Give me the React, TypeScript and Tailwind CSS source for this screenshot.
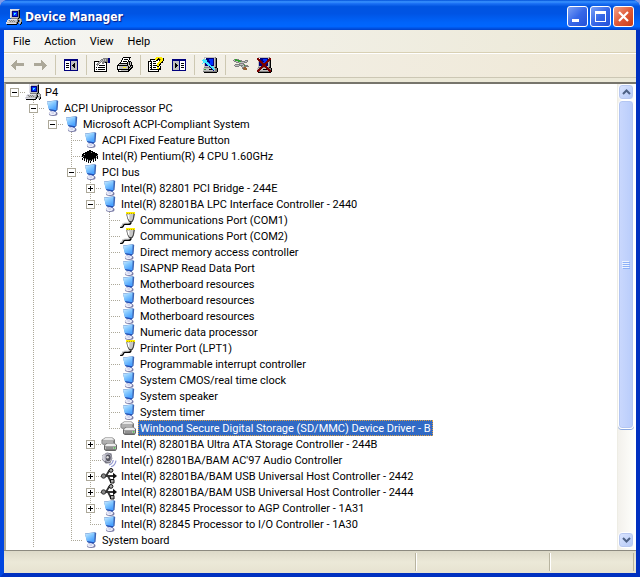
import React from 'react';

const PALETTE: Record<string, string> = {
  K: '#000000',
  W: '#ffffff',
  L: '#dedee8',
  G: '#c0c0c0',
  D: '#808080',
  N: '#00007c',
  B: '#0030ff',
  C: '#40e8ff',
  Y: '#ffef00',
  O: '#b08800',
  E: '#30a030',
  R: '#7a0000',
  M: '#9a6030',
};

function Pixels({ rows }: { rows: string[] }) {
  return (
    <svg width="16" height="16" viewBox="0 0 16 16" shapeRendering="crispEdges" className="block shrink-0" aria-hidden="true">
      {rows.flatMap((row, y) =>
        [...row].map((c, x) => (c === '.' ? null : <rect key={`${x}-${y}`} x={x} y={y} width="1" height="1" fill={PALETTE[c]} />)),
      )}
    </svg>
  );
}

const COMPUTER = [
  '....LLLLLLLLLD..',
  '....LWGGGGGGDK..',
  '....LGNNNNNNDK..',
  '....LGNBBBBNDK..',
  '....LGNBCCBNDK..',
  '....LGNBCBBNDK..',
  '....LGNBBBBNDK..',
  '....LGNNNNNNDK..',
  '....LGGGGGGGDK..',
  '.....DDDDDDDKDD.',
  '..LLLLLLLLLDDGGD',
  '.LGDGDGDGGGDK.GD',
  '.LLGDGDGDGGDKDGD',
  'LGGGGGGGGGDKDGGK',
  'LLLLLLLLLLDK.GDK',
  '.KKKKKKKKKK...K.',
];

const CHIP = [
  '................',
  '................',
  '.......KK.......',
  '.....KKKKKK.....',
  '...KKKKKKDKKK...',
  '.KKKKKKKKKKKKKK.',
  'KKGKKKKKKKKKKKKK',
  'KKKKKKKKKKKKKKKD',
  'KDKKKKKKKKKKKKGK',
  '.KKKKKKKKKKKKKDK',
  'K.KDKKKKKKKKDK.K',
  'K.K.KDKKKKDK.K..',
  '..K.K.KDDK.K.K..',
  '....K.K.K..K....',
  '......K.K.......',
  '................',
];

const TREE_PANE = [
  '................',
  '................',
  '.NNNNNNNNNNNNNN.',
  '.NNNNNNNNNNNNNN.',
  '.NWWWWWNGGGGGGN.',
  '.NWWWWWNGGGGGGN.',
  '.NWKKKWNGGGKGGN.',
  '.NWWWWWNGGKKGGN.',
  '.NWKKKWNGKKKGGN.',
  '.NWWWWWNGGKKGGN.',
  '.NWKKKWNGGGKGGN.',
  '.NWWWWWNGGGGGGN.',
  '.NWWWWWNGGGGGGN.',
  '.NNNNNNNNNNNNNN.',
  '................',
  '................',
];

const ACTION_PANE = [
  '................',
  '................',
  '.NNNNNNNNNNNNNN.',
  '.NNNNNNNNNNNNNN.',
  '.NGGGGGGNWWWWWN.',
  '.NGGGGGGNWWWWWN.',
  '.NGGKGGGNWKKKWN.',
  '.NGGKKGGNWWWWWN.',
  '.NGGKKKGNWKKKWN.',
  '.NGGKKGGNWWWWWN.',
  '.NGGKGGGNWKKKWN.',
  '.NGGGGGGNWWWWWN.',
  '.NGGGGGGNWWWWWN.',
  '.NNNNNNNNNNNNNN.',
  '................',
  '................',
];

const PROPERTIES = [
  '................',
  '.........DDDDDNN',
  '.......DDGDGDDNN',
  '......DGDGDGDDNN',
  'KKKKKDGDGDDDDDNN',
  'KWWWDGDWDDDKKDNN',
  'KWWDGDWWDDWWK...',
  'KWDDDWWWWWWWK...',
  'KWWDWKKKKKKWK...',
  'KWWWWWWWWWWWK...',
  'KWKWKKKKKKKWK...',
  'KWWWWWWWWWWWK...',
  'KWKWKKKKKKKWK...',
  'KWWWWWWWWWWWK...',
  'KKKKKKKKKKKKK...',
  '................',
];

const PRINTER = [
  '......KKKKKKKK..',
  '.....KWWWWWWK...',
  '.....KWKKKKWK...',
  '....KWWWWWWK....',
  '....KWKKKKWKKK..',
  '...KWWWWWWKGKGK.',
  '..KKKKKKKKKGKGK.',
  '.KGGGGGGGGKGKGK.',
  'KKKKKKKKKKKGGKKK',
  'KWGGGGGGGGGKGKGK',
  'KWGGGGYYYGGKKGKK',
  'KWGGGGGGGGGKGKK.',
  'KKKKKKKKKKKKKK..',
  '.KWWGGGGGGGKK...',
  '.KKKKKKKKKKK....',
  '................',
];

const HELP = [
  '........YYYYYY..',
  '.......YYYKOYYYK',
  '..KKKKKYYKKKOYYK',
  '..KWWWWWKKWKYYYK',
  'KKKKWKKKWWWYYYK.',
  'KWWKWWWWWWYYYKK.',
  'KWKKWKKKWYYYK...',
  'KWWKWWWWWYYKK...',
  'KWKKWKKKKYYK....',
  'KWWKWWWWWKKWK...',
  'KWKKWKKKWYYWK...',
  'KWWKWWWWWYYKK...',
  'KWKKKKKKKKKKK...',
  'KWWWWWWWWWK.....',
  'KKKKKKKKKKK.....',
  '................',
];

const SCAN = [
  '..GGGGGGGGGGGD..',
  '..GWNNNNNNNNGDK.',
  '.CGCNNNBBBBNGDK.',
  'CCCCCNNBBBBNGDK.',
  '.CCCCNNNBBBNGDK.',
  '.CCCCCBNBBBNGDK.',
  'C.GNCCCBBBBNGDK.',
  '..GNNCCCBBBNGDK.',
  '..GNNNCCCNNNGDK.',
  '..GGGGGNCCCGGDK.',
  '..DDDDDDNCCCDKK.',
  '.GGGGGGGGNCCGDDK',
  '.GEEGGGKKKNCCDDK',
  '.GGGGGGGGGGNGDDK',
  '.DDDDDDDDDDDDDDK',
  '..KKKKKKKKKKKKK.',
];

const UNINSTALL = [
  '..GGGGGGGGGGGD..',
  '.RRWNNNNNNNNGRR.',
  '.RRRNNNBBBBNRRR.',
  '..RRRNNBBBBRRRK.',
  '..GRRRNNBBRRRDK.',
  '..GNRRRBBRRRGDK.',
  '..GNNRRRRRRNGDK.',
  '..GNNNRRRRNNGDK.',
  '..GNNNRRRRNNGDK.',
  '..GGGRRRRRRGGDK.',
  '..DDRRRDDRRRDKK.',
  '.GGRRRGGGGRRRDDK',
  '.GRRRGGKKKKRRRDK',
  '.RRRGGGGGGGGRRRK',
  '.RRDDDDDDDDDDRRK',
  '..KKKKKKKKKKKKK.',
];

const DISABLE = [
  '................',
  '................',
  '.DEEDD..........',
  'DGEEEEEDD...DDD.',
  '.DDGGEEEDDDDGGD.',
  '...DDDGGGGGDDD..',
  '......DDDDD.....',
  '..DDDDDGGGDD....',
  '.DGGGGDDDDGEDDD.',
  '..DDDD..DGGDDDDD',
  '.........DDMM...',
  '.........DMMMM..',
  '..........DMMM..',
  '................',
  '................',
  '................',
];

function Arrow({ forward = false }: { forward?: boolean }) {
  return (
    <svg width="16" height="16" shapeRendering="crispEdges" className="block" aria-hidden="true">
      <path
        d={
          forward
            ? 'M2 6h7V3h1v1h1v1h1v1h1v1h1v1h1v1h-1v1h-1v1h-1v1h-1v1h-1V9H2z'
            : 'M14 6H7V3H6v1H5v1H4v1H3v1H2v1H1v1h1v1h1v1h1v1h1v1h1V9h8z'
        }
        fill="#aca899"
      />
    </svg>
  );
}

type IconName = 'computer' | 'device' | 'chip' | 'port' | 'drive' | 'sound' | 'usb';

function DeviceIcon({ name }: { name: IconName }) {
  if (name === 'computer') return <Pixels rows={COMPUTER} />;
  if (name === 'chip') return <Pixels rows={CHIP} />;
  return (
    <svg width="16" height="16" viewBox="0 0 16 16" className="block shrink-0" aria-hidden="true">
      {name === 'device' && (
        <>
          <ellipse cx="9.2" cy="13.8" rx="4.3" ry="2.2" fill="#7c7ea8" />
          <path d="M6.5 10.5h5.5l-.3 3H7z" fill="#9496c0" />
          <ellipse cx="8.6" cy="13.3" rx="3.4" ry="1.8" fill="#eceefa" />
          <path d="M7.5 11h2.5v3H7.5z" fill="#d4d6ee" />
          <path d="M3 1.5 13 .2l1.2.8-.6 8.8-2 1.8L5.2 10z" fill="#3d66b4" />
          <path d="M3 1.7 12.6.6l-.3 9.6L4.8 9.2z" fill="url(#screen)" />
          <path d="M4.8 9.2l7.5 1-.8 1.2-5.5-1z" fill="#2450b4" />
        </>
      )}
      {name === 'port' && (
        <>
          <path d="M10.5 8v2.5q0 1.5-2 1.5H5q-2 0-2 1.5T0 15.5" fill="none" stroke="#000" strokeWidth="2.2" />
          <path d="M10 8v2q0 1.2-2 1.2H5q-2 0-2.4 1.6T0 14.6" fill="none" stroke="#d0d0d0" strokeWidth="1.2" />
          <path d="M6 1.5h9l-1.2 6-1.3 2.5H9L7.5 7z" fill="#444" />
          <path d="M6.4 2h7.2l-.8 5-1.2 2h-2L8 6.5z" fill="#c6c6c6" />
          <path d="M8 3v3l1.3 2V3z" fill="#fff" />
          <path d="M6 0h9v2H6z" fill="#ffee00" />
          <path d="M7 1.5h8" stroke="#b8a000" strokeDasharray="1 1" />
        </>
      )}
      {name === 'drive' && (
        <>
          <path d="M2 3 4 1.5h7.5L14 3.8v5H2L.5 7.5V4z" fill="#777" />
          <path d="M2.5 3.2 4.2 2h7l1.6 1.4v1H1.5z" fill="#e6e6e6" />
          <path d="M1.3 4.8h11v3h-11z" fill="#b0b0b0" />
          <path d="M4 8.8 6 7h7.5L16 9v4l-1.5 2H4.8L3 13.5v-4z" fill="#666" />
          <path d="M4.5 8.8 6.4 7.6h6.8L15 9v1H4z" fill="#ededed" />
          <path d="M4 10.3h11v3H4z" fill="#bcbcbc" />
          <path d="M5 12h7" stroke="#666" />
          <path d="M12.7 11.3h1.6v1.2h-1.6z" fill="#2bc02b" />
        </>
      )}
      {name === 'sound' && (
        <>
          <path d="M1 3.5 6 .6l4.5 1 .8 5-2 4.6-4.6.4L1 7.5z" fill="#747480" />
          <path d="M1 3.8 4 2v7.5L1.2 7.3z" fill="#d4d4dc" />
          <ellipse cx="7" cy="5.8" rx="3.6" ry="4.6" fill="#bcbcc8" transform="rotate(-15 7 5.8)" />
          <ellipse cx="7.2" cy="5.8" rx="2.5" ry="3.4" fill="#55555f" />
          <circle cx="6.6" cy="5.2" r="1.2" fill="#ddd" />
          <path d="M8 13q3.8-1 4.2-5M10 14.8q4.2-1.4 5-6.2" fill="none" stroke="#9298d0" strokeWidth="1.2" />
        </>
      )}
      {name === 'usb' && (
        <>
          <path d="M3 8h11M5 8l3-5h2M7 8l2.5 5H11" fill="none" stroke="#333" strokeWidth="1.8" />
          <path d="M12 4.8 16 8l-4 3.2z" fill="#111" />
          <circle cx="2.6" cy="8" r="2.2" fill="#8a8a8a" stroke="#333" strokeWidth="1" />
          <circle cx="10" cy="2.4" r="1.9" fill="#aaa" stroke="#111" strokeWidth="1" />
          <path d="M9.5 11.5h3.5v3.5H9.5z" fill="#aaa" stroke="#111" strokeWidth="1" />
        </>
      )}
    </svg>
  );
}

/*
 * Each guide letter is one 19px column:
 * "." blank, "|" line through, "t" branch, "l" last branch,
 * "+" and "-" expander on a line, "m" expander with no line behind it.
 */
type Row = { guides: string; icon: IconName; label: string; selected?: boolean };

const ROWS: Row[] = [
  { guides: 'm', icon: 'computer', label: 'P4' },
  { guides: '.-', icon: 'device', label: 'ACPI Uniprocessor PC' },
  { guides: '.|m', icon: 'device', label: 'Microsoft ACPI-Compliant System' },
  { guides: '.|.t', icon: 'device', label: 'ACPI Fixed Feature Button' },
  { guides: '.|.t', icon: 'chip', label: 'Intel(R) Pentium(R) 4 CPU 1.60GHz' },
  { guides: '.|.-', icon: 'device', label: 'PCI bus' },
  { guides: '.|.|+', icon: 'device', label: 'Intel(R) 82801 PCI Bridge - 244E' },
  { guides: '.|.|-', icon: 'device', label: 'Intel(R) 82801BA LPC Interface Controller - 2440' },
  { guides: '.|.||t', icon: 'port', label: 'Communications Port (COM1)' },
  { guides: '.|.||t', icon: 'port', label: 'Communications Port (COM2)' },
  { guides: '.|.||t', icon: 'device', label: 'Direct memory access controller' },
  { guides: '.|.||t', icon: 'device', label: 'ISAPNP Read Data Port' },
  { guides: '.|.||t', icon: 'device', label: 'Motherboard resources' },
  { guides: '.|.||t', icon: 'device', label: 'Motherboard resources' },
  { guides: '.|.||t', icon: 'device', label: 'Motherboard resources' },
  { guides: '.|.||t', icon: 'device', label: 'Numeric data processor' },
  { guides: '.|.||t', icon: 'port', label: 'Printer Port (LPT1)' },
  { guides: '.|.||t', icon: 'device', label: 'Programmable interrupt controller' },
  { guides: '.|.||t', icon: 'device', label: 'System CMOS/real time clock' },
  { guides: '.|.||t', icon: 'device', label: 'System speaker' },
  { guides: '.|.||t', icon: 'device', label: 'System timer' },
  { guides: '.|.||l', icon: 'drive', label: 'Winbond Secure Digital Storage (SD/MMC) Device Driver - B', selected: true },
  { guides: '.|.|+', icon: 'drive', label: 'Intel(R) 82801BA Ultra ATA Storage Controller - 244B' },
  { guides: '.|.|t', icon: 'sound', label: "Intel(r) 82801BA/BAM AC'97 Audio Controller" },
  { guides: '.|.|+', icon: 'usb', label: 'Intel(R) 82801BA/BAM USB Universal Host Controller - 2442' },
  { guides: '.|.|+', icon: 'usb', label: 'Intel(R) 82801BA/BAM USB Universal Host Controller - 2444' },
  { guides: '.|.|+', icon: 'device', label: 'Intel(R) 82845 Processor to AGP Controller - 1A31' },
  { guides: '.|.|l', icon: 'device', label: 'Intel(R) 82845 Processor to I/O Controller - 1A30' },
  { guides: '.|.l', icon: 'device', label: 'System board' },
];

function Guide({ kind }: { kind: string }) {
  if (kind === '.') return <span className="block h-4 w-[19px] shrink-0" />;
  const box = '+-m'.includes(kind);
  const drawing = (
    <svg width="19" height="16" shapeRendering="crispEdges" className="block shrink-0" aria-hidden="true">
      {'|t+-'.includes(kind) && <path d="M8.5 0v16" stroke="#aca899" strokeDasharray="1 1" />}
      {kind === 'l' && <path d="M8.5 0v9" stroke="#aca899" strokeDasharray="1 1" />}
      {kind !== '|' && <path d="M8 8.5h11" stroke="#aca899" strokeDasharray="1 1" />}
      {box && (
        <>
          <rect x="4.5" y="4.5" width="8" height="8" fill="#fff" stroke="#aca899" />
          <path d="M6 8.5h5" stroke="#000" />
          {kind === '+' && <path d="M8.5 6v5" stroke="#000" />}
        </>
      )}
    </svg>
  );
  if (!box) return drawing;
  return (
    <button type="button" aria-label={kind === '+' ? 'Expand' : 'Collapse'} className="block shrink-0">
      {drawing}
    </button>
  );
}

const TOOLS: { label: string; icon: React.ReactNode }[][] = [
  [
    { label: 'Back', icon: <Arrow /> },
    { label: 'Forward', icon: <Arrow forward /> },
  ],
  [{ label: 'Show/Hide Console Tree', icon: <Pixels rows={TREE_PANE} /> }],
  [
    { label: 'Properties', icon: <Pixels rows={PROPERTIES} /> },
    { label: 'Print', icon: <Pixels rows={PRINTER} /> },
  ],
  [
    { label: 'Help', icon: <Pixels rows={HELP} /> },
    { label: 'Show/Hide Action Pane', icon: <Pixels rows={ACTION_PANE} /> },
  ],
  [{ label: 'Scan for hardware changes', icon: <Pixels rows={SCAN} /> }],
  [
    { label: 'Disable', icon: <Pixels rows={DISABLE} /> },
    { label: 'Uninstall', icon: <Pixels rows={UNINSTALL} /> },
  ],
];

function ScrollButton({ down = false }: { down?: boolean }) {
  return (
    <button
      type="button"
      aria-label={down ? 'Scroll down' : 'Scroll up'}
      className="flex h-4 w-full shrink-0 items-center justify-center rounded-sm border border-white bg-linear-to-br from-[#dce6ff] to-[#b4c8f6] shadow-[inset_0_0_0_1px_#b8c8f0]"
    >
      <svg width="9" height="6" viewBox="0 0 9 6" aria-hidden="true">
        <path d={down ? 'M1 1l3.5 3.5L8 1' : 'M1 5l3.5-3.5L8 5'} fill="none" stroke="#4d6185" strokeWidth="2" />
      </svg>
    </button>
  );
}

const CAPTION = 'flex size-[21px] items-center justify-center rounded-[3px] border border-white bg-linear-to-br';
const CAPTION_BLUE = 'from-[#7c9ff4] via-[#3768e8] to-[#2450d8]';
const CAPTION_RED = 'from-[#f0a088] via-[#e05a38] to-[#c83c14]';

export default function App() {
  return (
    <div className="bg-[#7f9be8]">
      <svg width="0" height="0" className="absolute" aria-hidden="true">
        <linearGradient id="screen" x1="0" y1="0" x2="0.6" y2="1">
          <stop offset="0" stopColor="#d8f0ff" />
          <stop offset="0.5" stopColor="#84c8ff" />
          <stop offset="1" stopColor="#48a0ff" />
        </linearGradient>
      </svg>
      <div className="flex h-screen w-full flex-col overflow-hidden rounded-t-lg bg-[#0046e0] font-['Roboto','Liberation_Sans',sans-serif] text-[11px] leading-4 text-black">
        <header className="flex h-[30px] shrink-0 items-center bg-[linear-gradient(to_bottom,#0050d8_0,#3a93ff_6%,#1a70f4_12%,#0054e0_22%,#0054e4_45%,#0064fa_75%,#0066ff_88%,#0050e0_95%,#0040c8_100%)] pt-[3px] pr-[6px] pl-[6px]">
          <Pixels rows={COMPUTER} />
          <h1 className="ml-[3px] flex-1 font-['DejaVu_Sans_Condensed','Open_Sans',sans-serif] text-[12px] font-bold text-white [text-shadow:1px_1px_1px_#0a1883]">
            Device Manager
          </h1>
          <div className="flex gap-[2px]">
            <button type="button" aria-label="Minimize" className={`${CAPTION} ${CAPTION_BLUE}`}>
              <svg width="13" height="13" aria-hidden="true">
                <path d="M1 9h7v3H1z" fill="#fff" />
              </svg>
            </button>
            <button type="button" aria-label="Maximize" className={`${CAPTION} ${CAPTION_BLUE}`}>
              <svg width="13" height="13" aria-hidden="true">
                <path d="M1 1h11v11H1zM2 4v7h9V4z" fill="#fff" fillRule="evenodd" />
              </svg>
            </button>
            <button type="button" aria-label="Close" className={`${CAPTION} ${CAPTION_RED}`}>
              <svg width="13" height="13" aria-hidden="true">
                <path d="M2 2l9 9M11 2l-9 9" stroke="#fff" strokeWidth="2.2" />
              </svg>
            </button>
          </div>
        </header>

        <div className="flex min-h-0 flex-1 border-r-4 border-b-4 border-l-4 border-r-[#0030c0] border-b-[#0030c0] border-l-[#0046e0]">
          <div className="flex min-w-0 flex-1 flex-col bg-[#ece9d8]">
            <nav aria-label="Menu" className="flex h-[22px] shrink-0 items-end bg-linear-to-r from-[#f6f6f3] to-[#ece8d6] pb-[2px] pl-[2px]">
              {['File', 'Action', 'View', 'Help'].map((m) => (
                <button key={m} type="button" className="px-[7px]">
                  {m}
                </button>
              ))}
            </nav>
            <div
              role="toolbar"
              aria-label="Tools"
              className="flex h-[26px] shrink-0 items-center border-t border-b border-t-[#d8d0b4] border-b-[#ccc7b4] bg-linear-to-r from-[#f4f3ee] to-[#efe8d6] pl-[2px] shadow-[inset_0_1px_#fff]"
            >
              {TOOLS.map((group, i) => (
                <div key={i} className={i ? 'flex h-5 items-center border-l border-[#cdc8b2]' : 'flex h-5 items-center'}>
                  {group.map((t) => (
                    <button key={t.label} type="button" aria-label={t.label} className={i ? 'pl-[7px] last:pr-[7px]' : 'pl-1 last:pr-[7px] last:pl-[6px]'}>
                      {t.icon}
                    </button>
                  ))}
                </div>
              ))}
            </div>

            <main className="mt-1 flex min-h-0 flex-1 border-t-2 border-l-2 border-t-[#77756c] border-l-[#aca899] bg-white">
              <ul className="min-w-0 flex-1 overflow-hidden" aria-label="Devices">
                {ROWS.map((r, i) => (
                  <li key={i} className="flex h-4 items-center whitespace-nowrap">
                    {[...r.guides].map((g, j) => (
                      <Guide key={j} kind={g} />
                    ))}
                    <DeviceIcon name={r.icon} />
                    <span
                      className={
                        r.selected
                          ? 'ml-[2px] h-4 border border-dotted border-[#e0a040] bg-[#316ac5] px-px leading-4 text-white'
                          : 'ml-[2px] h-4 px-[2px] leading-[18px]'
                      }
                    >
                      {r.label}
                    </span>
                  </li>
                ))}
              </ul>
              <div className="mr-[2px] flex w-[17px] shrink-0 flex-col border-l border-[#eeede5] bg-linear-to-r from-[#f3f1ec] to-[#fefefb] pb-[2px]">
                <ScrollButton />
                <div className="flex min-h-0 flex-1 flex-col">
                  <div className="flex flex-[329] items-center justify-center rounded-sm border border-white bg-linear-to-r from-[#cad8fd] to-[#b8ccfb] shadow-[inset_0_0_0_1px_#b4c6f2,0_1px_#8aa8e0]">
                    <svg width="8" height="8" shapeRendering="crispEdges" aria-hidden="true">
                      <path d="M0 .5h7M0 2.5h7M0 4.5h7M0 6.5h7" stroke="#eef4fe" />
                      <path d="M1 1.5h7M1 3.5h7M1 5.5h7M1 7.5h7" stroke="#8cb0f8" />
                    </svg>
                  </div>
                  <div className="flex-[103]" />
                </div>
                <ScrollButton down />
              </div>
            </main>

            <footer className="flex h-[23px] shrink-0 border-t border-[#8c8a80] bg-linear-to-b from-[#dcd9c8] via-[#ece9d8] to-[#e6e2d0] pt-[2px] pb-[2px]">
              <div className="flex-[410] border-r border-[#b8b4a0]" />
              <div className="flex-[131] border-r border-l border-l-white border-r-[#b8b4a0]" />
              <div className="mr-[2px] flex-[82] border-r border-l border-l-white border-r-[#b8b4a0]" />
            </footer>
          </div>
        </div>
      </div>
    </div>
  );
}
